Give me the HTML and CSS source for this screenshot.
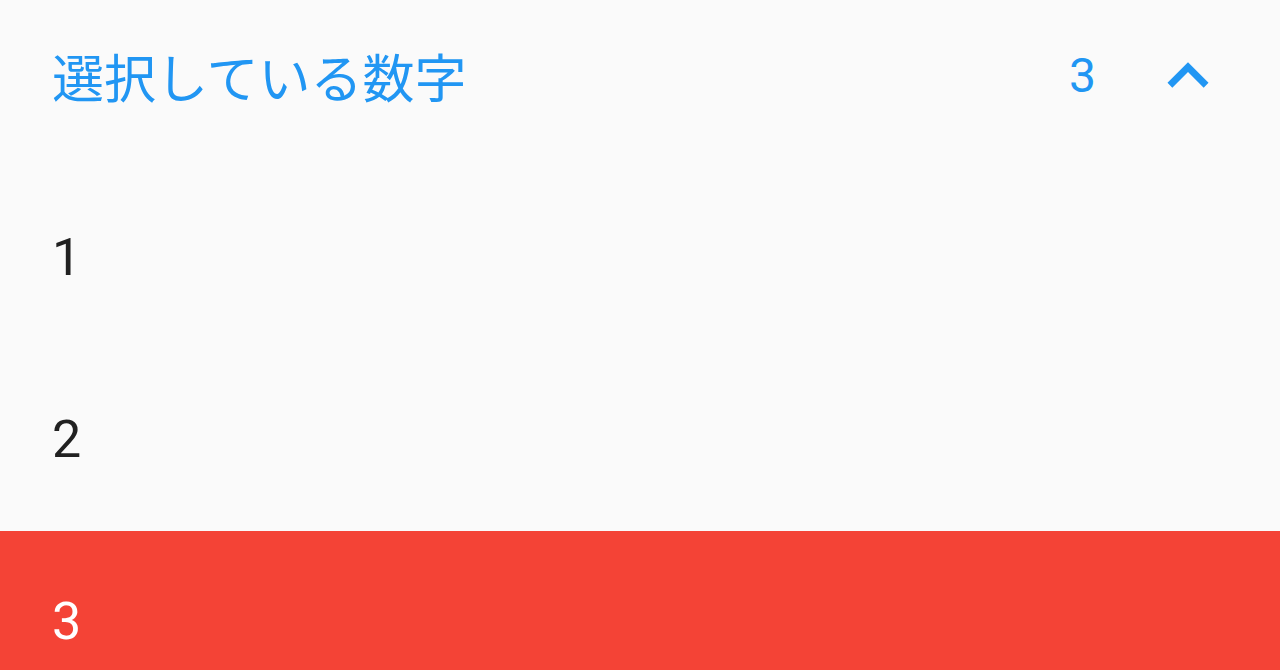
FILE: index.html
```html
<!DOCTYPE html>
<html lang="ja">
<head>
<meta charset="utf-8">
<link rel="stylesheet" href="styles.css">
</head>
<body>
<div class="panel">
  <div class="header">
    <span class="title">選択している数字</span>
    <span class="value">3</span>
    <svg class="chevron" viewBox="0 0 24 24" aria-hidden="true"><path d="M12 8l-6 6 1.41 1.41L12 10.83l4.59 4.58L18 14z"/></svg>
  </div>
  <ul class="list">
    <li class="item">1</li>
    <li class="item">2</li>
    <li class="item selected">3</li>
  </ul>
</div>
</body>
</html>
```
FILE: styles.css
```css
html, body {
  margin: 0;
  padding: 0;
  background: #fafafa;
  overflow: hidden;
}
.panel {
  width: 1280px;
  height: 670px;
  overflow: hidden;
  background: #fafafa;
}
.header {
  display: flex;
  align-items: center;
  height: 152px;
  padding: 0 51px 0 52px;
  box-sizing: border-box;
  color: #2196f3;
}
.title {
  flex: 1;
  font-family: "Noto Sans CJK JP", "Noto Sans", sans-serif;
  font-size: 52px;
  line-height: 1;
}
.value {
  font-family: Roboto, "Noto Sans", sans-serif;
  font-size: 48px;
  line-height: 1;
  margin-right: 51px;
}
.chevron {
  width: 82px;
  height: 82px;
  fill: #2196f3;
  display: block;
}
.list {
  list-style: none;
  margin: 0;
  padding: 15px 0 0;
}
.item {
  height: 182px;
  display: flex;
  align-items: center;
  padding-left: 52px;
  font-family: Roboto, "Noto Sans", sans-serif;
  font-size: 52px;
  line-height: 1;
  color: #212121;
}
.item.selected {
  background: #f44336;
  color: #ffffff;
}
```
